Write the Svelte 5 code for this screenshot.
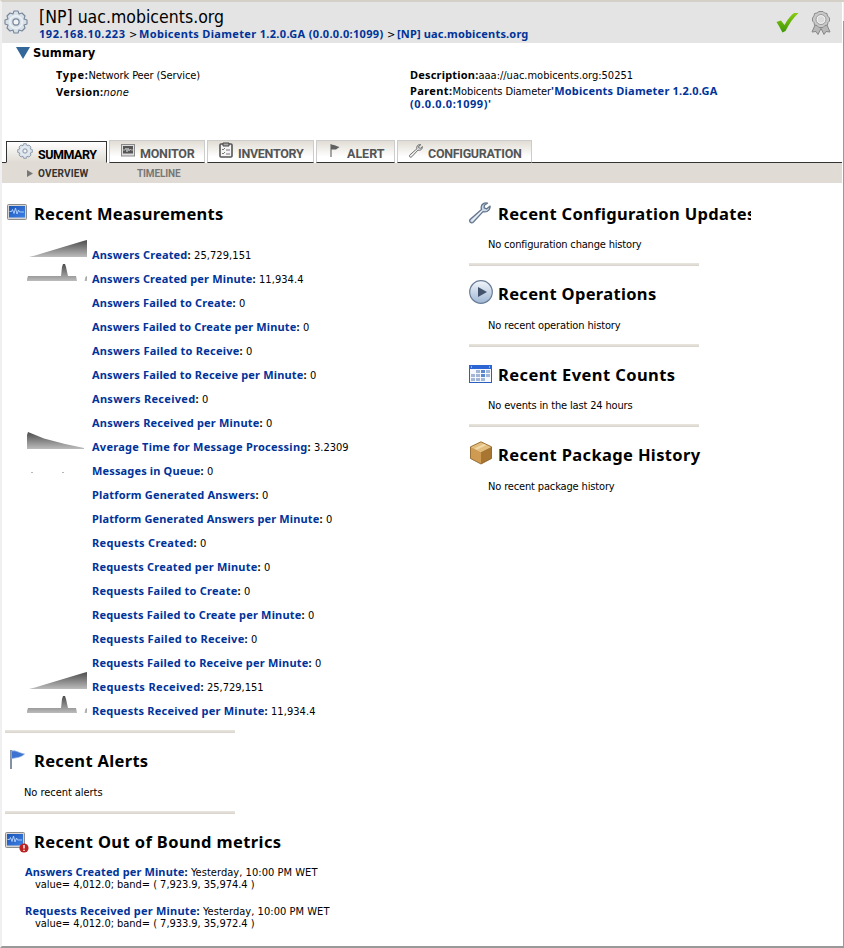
<script>
  // Spreads the letters of a label evenly over the given width.
  function fit(node, width) {
    const natural = node.getBoundingClientRect().width;
    const count = node.textContent.length;
    node.style.letterSpacing = `${(width - 0.5 - natural) / count}px`;
  }

  const metrics = [
    ['Answers Created', 96, '25,729,151', 64, 'rise'],
    ['Answers Created per Minute', 161, '11,934.4', 51, 'spike'],
    ['Answers Failed to Create', 141, '0', 12],
    ['Answers Failed to Create per Minute', 205, '0', 12],
    ['Answers Failed to Receive', 148, '0', 12],
    ['Answers Failed to Receive per Minute', 212, '0', 12],
    ['Answers Received', 104, '0', 12],
    ['Answers Received per Minute', 168, '0', 12],
    ['Average Time for Message Processing', 216, '3.2309', 41, 'fall'],
    ['Messages in Queue', 109, '0', 12, 'dots'],
    ['Platform Generated Answers', 164, '0', 12],
    ['Platform Generated Answers per Minute', 228, '0', 12],
    ['Requests Created', 102, '0', 12],
    ['Requests Created per Minute', 166, '0', 12],
    ['Requests Failed to Create', 146, '0', 12],
    ['Requests Failed to Create per Minute', 210, '0', 12],
    ['Requests Failed to Receive', 153, '0', 12],
    ['Requests Failed to Receive per Minute', 217, '0', 12],
    ['Requests Received', 109, '25,729,151', 63, 'rise'],
    ['Requests Received per Minute', 173, '11,934.4', 51, 'spike']
  ];

  const panels = [
    ['wrench', 'Recent Configuration Updates', 258, 'No configuration change history', 154, 12],
    ['play', 'Recent Operations', 159, 'No recent operation history', 133, 13],
    ['calendar', 'Recent Event Counts', 178, 'No events in the last 24 hours', 145, 12],
    ['box', 'Recent Package History', 203, 'No recent package history', 127, 13]
  ];

  const bounds = [
    ['Answers Created per Minute', 160, 'Yesterday, 10:00 PM WET', 127, 'value= 4,012.0; band= ( 7,923.9, 35,974.4 )', 220],
    ['Requests Received per Minute', 172, 'Yesterday, 10:00 PM WET', 127, 'value= 4,012.0; band= ( 7,933.9, 35,972.4 )', 220]
  ];

  const tabs = [
    ['monitor', 'MONITOR', 55],
    ['inventory', 'INVENTORY', 66],
    ['alert', 'ALERT', 38],
    ['configuration', 'CONFIGURATION', 94]
  ];
</script>

{#snippet gear(size)}
  <svg class="gear" width={size} height={size} viewBox="0 0 24 24">
    <path d="M10 1h4l1 3 3-1 3 3-1 3 3 1v4l-3 1 1 3-3 3-3-1-1 3h-4l-1-3-3 1-3-3 1-3-3-1v-4l3-1-1-3 3-3 3 1z" fill="#d8e0e8" stroke="#76869b" stroke-width="1.1" stroke-linejoin="round" />
    <circle cx="12" cy="12" r="6.3" fill="none" stroke="#eef2f6" stroke-width="1.4" />
    <circle cx="12" cy="12" r="3.1" fill="#f3f4f6" stroke="#76869b" stroke-width="1.2" />
  </svg>
{/snippet}

{#snippet wrench(size, fill, stroke)}
  <svg width={size} height={size} viewBox="0 0 22 22">
    <path d="M18.500 1.200c-2.800-.8-6 .7-6.300 3.800-.1 1 .1 1.800.3 2.500L1.300 17.200c-1 1-.8 2.200 0 3s2.200.9 3.100-.1L14 9.600c3 1 6.500-.6 7-3.900l.1-1.600-3.300 2.700-2.700-1 .3-2.500z" fill={fill} stroke={stroke} stroke-width="1.300" stroke-linejoin="round" />
    <path d="M3 18.700 13.200 8.500" stroke="#fff" stroke-width="1" />
  </svg>
{/snippet}

{#snippet chart()}
  <svg width="24" height="20" viewBox="0 0 24 20">
    <defs>
      <linearGradient id="screen" x1="0" y1="0" x2="1" y2="1">
        <stop offset="0" stop-color="#1c55b8" /><stop offset="1" stop-color="#3e80e4" />
      </linearGradient>
    </defs>
    <rect x=".5" y=".5" width="19" height="15" rx="1" fill="#d5d5d5" stroke="#8c8c8c" />
    <rect x="2" y="2" width="16" height="11.500" fill="url(#screen)" />
    <path d="M2.500 7.500h2l1-2 1.500 4 1.500-5.500 1.500 6 1.500-4 1 2h4.500" fill="none" stroke="#b9d6ff" stroke-width=".9" />
  </svg>
{/snippet}

{#snippet spark(kind)}
  <svg class="spark" width="60" height="18" viewBox="0 0 60 18">
    <defs>
      <linearGradient id="shade" gradientUnits="userSpaceOnUse" x1="0" y1="0" x2="0" y2="17">
        <stop offset="0" stop-color="#4c4c4c" /><stop offset="1" stop-color="#bcbcbc" />
      </linearGradient>
    </defs>
    {#if kind === 'rise'}
      <path d="M2 17 8 15.500 57 .8 60 0v17z" fill="url(#shade)" />
    {:else if kind === 'spike'}
      <path d="M0 17v-2l1-3h33l1-9 1-3h2l1 3 2 9h8l1 5zM57.500 17l1-4 1.500-1v5z" fill="url(#shade)" />
    {:else if kind === 'fall'}
      <path d="M0 17V3l1-3 16 6.500L38 12l19 4v1z" fill="url(#shade)" />
    {:else if kind === 'dots'}
      <path d="M4 16.500h2M35 16.500h2" stroke="#b5b5b5" />
    {/if}
  </svg>
{/snippet}

<div class="page">
  <header>
    <div class="lead">{@render gear(24)}</div>
    <div class="titles">
      <h1><span use:fit={185.5}>[NP] uac.mobicents.org</span></h1>
      <nav class="crumbs">
        <a use:fit={87}>192.168.10.223</a><i>&gt;</i><a use:fit={245}>Mobicents Diameter 1.2.0.GA (0.0.0.0:1099)</a><i>&gt;</i><a use:fit={132}>[NP] uac.mobicents.org</a>
      </nav>
    </div>
    <svg class="check" width="24" height="22" viewBox="0 0 24 22">
      <defs>
        <linearGradient id="green" x1="0" y1="0" x2="0" y2="1">
          <stop offset="0" stop-color="#8acb10" /><stop offset="1" stop-color="#3c9608" />
        </linearGradient>
      </defs>
      <path d="M.5 10 5 8.500 8.500 13C11.500 7.500 15 3 18 1h4.500C17 6 13 12 9.500 19l-3 1.500C4.500 17 3 13.500.5 10z" fill="url(#green)" />
    </svg>
    <svg class="badge" width="20" height="25" viewBox="0 0 20 25">
      <path d="M4 15 1 22l4-.5L7 24.500l3-6 3 6 2-3 4 .5-3-7z" fill="#b8b8b8" stroke="#888" />
      <path d="M8 1.500h4l1.500 1.500 2.500.5.500 2.500L18.500 8v3L17 12.500l-.5 2.500-2.500.5-2 2H8l-2-2-2.500-.5L3 12.500 1.500 11V8L3 6l.5-2.500L6 3z" fill="#c9c9c9" stroke="#8a8a8a" />
      <circle cx="10" cy="9.500" r="5" fill="#eee" stroke="#999" />
      <circle cx="10" cy="9.500" r="3.200" fill="#dadada" />
    </svg>
  </header>

  <section class="summary">
    <div class="fold">
      <svg width="14" height="12" viewBox="0 0 14 12"><path d="M0 0h14L7 12z" fill="#336699" /></svg>
      <b use:fit={63}>Summary</b>
    </div>
    <div class="facts">
      <div class="left">
        <p><b use:fit={33}>Type:</b><span use:fit={112}>Network Peer (Service)</span></p>
        <p class="version"><b use:fit={48}>Version:</b><em use:fit={26}>none</em></p>
      </div>
      <div>
        <p><b use:fit={69}>Description:</b><span use:fit={155}>aaa://uac.mobicents.org:50251</span></p>
        <p class="parent"><b use:fit={43}>Parent:</b><span use:fit={99}>Mobicents Diameter </span><a use:fit={167}>'Mobicents Diameter 1.2.0.GA</a></p>
        <p class="wrap"><a use:fit={82}>(0.0.0.0:1099)'</a></p>
      </div>
    </div>
  </section>

  <nav class="tabs">
    <div class="tab active">
      {@render gear(16)}
      <span use:fit={59}>SUMMARY</span>
    </div>
    {#each tabs as [id, label, width]}
      <div class="tab {id}">
        {#if id === 'monitor'}
          <svg width="14" height="13" viewBox="0 0 14 13">
            <rect x=".5" y=".5" width="13" height="11.500" fill="#ddd" stroke="#888" />
            <rect x="2" y="2" width="10" height="7.500" fill="#555" />
            <path d="M2 6h2l1-2 1 4 1-4 1 3 1-2 1 1h2" fill="none" stroke="#ccc" stroke-width=".8" />
          </svg>
        {:else if id === 'inventory'}
          <svg width="14" height="16" viewBox="0 0 14 16">
            <rect x="1" y="2" width="12" height="13" rx="1" fill="#f4f4f4" stroke="#555" stroke-width="1.600" />
            <path d="M4 1h6v3H4z" fill="#aaa" stroke="#444" />
            <path d="m3 7 1 1 2-2M3 11l1 1 2-2M7 8h4M7 12h4" fill="none" stroke="#777" />
          </svg>
        {:else if id === 'alert'}
          <svg width="10" height="14" viewBox="0 0 10 14">
            <path d="M1 0v13" stroke="#777" stroke-width="1.300" /><path d="M1 1c3-1 4 1 8.500 2L6 5.500H1z" fill="#606060" />
          </svg>
        {:else}
          {@render wrench(14, '#e4e4e4', '#555')}
        {/if}
        <span use:fit={width}>{label}</span>
      </div>
    {/each}
    <div class="rest"></div>
  </nav>
  <nav class="subtabs">
    <svg width="6" height="7" viewBox="0 0 6 7"><path d="M0 0v7l6-3.500z" fill="#777" /></svg>
    <b use:fit={51}>OVERVIEW</b>
    <b class="dim" use:fit={44}>TIMELINE</b>
  </nav>

  <main>
    <div class="column">
      <h2 class="inset"><span class="icon">{@render chart()}</span><span use:fit={190}>Recent Measurements</span></h2>
      <ul>
        {#each metrics as [name, width, value, rest, kind]}
          <li>
            {@render spark(kind)}
            <div><a use:fit={width}>{name}</a><b class="colon">:</b><span use:fit={rest - 6}>{value}</span></div>
          </li>
        {/each}
      </ul>
      <hr />
      <h2>
        <span class="icon flag">
          <svg width="16" height="20" viewBox="0 0 16 20">
            <path d="M1 0v19" stroke="#5c6b85" stroke-width="1.500" /><path d="M1.500 1c5-.8 7 2 13 3-3 3-6 3.500-13 4.500z" fill="#3c72d0" stroke="#8fb1ea" stroke-width=".7" />
          </svg>
        </span><span use:fit={115}>Recent Alerts</span>
      </h2>
      <p class="note alerts"><span use:fit={79}>No recent alerts</span></p>
      <hr />
      <h2>
        <span class="icon bound">
          {@render chart()}
          <svg class="warn" width="10" height="10" viewBox="0 0 10 10"><circle cx="5" cy="5" r="4.600" fill="#bd2222" /><path d="M5 2v3.500M5 6.700v1.400" stroke="#fff" stroke-width="1.400" /></svg>
        </span><span use:fit={248}>Recent Out of Bound metrics</span>
      </h2>
      <div class="bounds">
        {#each bounds as [name, width, when, whenWidth, band, bandWidth]}
          <div class="item">
            <p><a use:fit={width}>{name}</a><b class="colon">:</b><span use:fit={whenWidth}>{when}</span></p>
            <p class="band"><span use:fit={bandWidth}>{band}</span></p>
          </div>
        {/each}
      </div>
    </div>

    <div class="column right">
      {#each panels as [icon, title, width, note, noteWidth, gap], i}
        <h2>
          <span class="icon {icon}">
            {#if icon === 'wrench'}
              {@render wrench(22, '#cbd8e8', '#63758c')}
            {:else if icon === 'play'}
              <svg width="24" height="24" viewBox="0 0 24 24">
                <defs><linearGradient id="disc" x1="0" y1="0" x2="0" y2="1"><stop offset="0" stop-color="#f2f6fa" /><stop offset="1" stop-color="#9fb7d4" /></linearGradient></defs>
                <circle cx="12" cy="12" r="11.300" fill="url(#disc)" stroke="#6a7d98" stroke-width="1.200" />
                <path d="M9 7v10l9-5z" fill="#43536c" />
              </svg>
            {:else if icon === 'calendar'}
              <svg width="23" height="18" viewBox="0 0 23 18">
                <rect x=".5" y=".5" width="22" height="17" fill="#f5f8fd" stroke="#2a5fc0" />
                <path d="M0 0h23v4H0z" fill="#2d66d4" /><path d="M2 2h1M20 2h1" stroke="#fff" />
                <path d="M7 5h4v3H7zM17 5h4v3h-4zM2 9h4v3H2zM7 9h4v3H7zM17 9h4v3h-4zM2 13h4v3H2zM7 13h4v3H7zM12 13h4v3h-4z" fill="#a3b6d6" />
                <path d="M12 5h4v3h-4zM12 9h4v3h-4z" fill="#5b86d0" />
              </svg>
            {:else}
              <svg width="24" height="24" viewBox="0 0 24 24">
                <path d="m12 .8 10.500 5L12 11 1.500 5.800z" fill="#e3bd7c" /><path d="M1.500 5.800 12 11v12L1.500 17.500z" fill="#cf9a52" /><path d="M22.500 5.800 12 11v12l10.500-5.500z" fill="#a87630" />
                <path d="m5.500 7.500 10-5 2.500 1.200-10 5z" fill="#f0d8a8" /><path d="m12 .8 10.500 5v11.700L12 23 1.500 17.500V5.800z" fill="none" stroke="#85591d" stroke-width=".8" />
              </svg>
            {/if}
          </span><span use:fit={width}>{title}</span>
        </h2>
        <p class="note" style:margin-top="{gap}px"><span use:fit={noteWidth}>{note}</span></p>
        {#if i < 3}<hr />{/if}
      {/each}
    </div>
  </main>
</div>

<style>
  :global(body) { margin: 0; background: #fff; }
  .page {
    box-sizing: border-box; width: 844px; height: 948px; overflow: hidden;
    border-top: 2px solid #d4d0c8; border-left: 2px solid #f0f0f0; border-bottom: 2px solid #999;
    background: linear-gradient(#f0f0f0 19px, #999 19px) right / 1px 100% no-repeat #fff;
    color: #000; font: 11px/14px "DejaVu Sans Condensed", "DejaVu Sans", sans-serif;
  }
  p, h1, h2, ul { margin: 0; padding: 0; font-weight: normal; }
  span, a, b, em { white-space: pre; }
  a, b { font-family: "Noto Sans", "DejaVu Sans Condensed", sans-serif; font-weight: bold; }
  a { color: #003399; }
  .colon { display: inline-block; width: 6.5px; }
  svg { display: block; flex: none; }
  header { display: flex; width: 840px; height: 41px; background: #e4e4e4; }
  .lead { width: 37px; padding: 8px 0 0 2px; box-sizing: border-box; }
  .titles { flex: 1; }
  h1 { height: 20px; padding-top: 5px; font-size: 17.5px; line-height: 20px; }
  .crumbs { display: flex; align-items: baseline; height: 14px; line-height: 14px; }
  .crumbs i { width: 13.5px; padding-left: 3.5px; box-sizing: border-box; font-style: normal; }
  .check { margin: 10px 11px 0 0; }
  .badge { margin: 8px 11px 0 0; }
  .summary { height: 97px; }
  .fold { display: flex; gap: 3px; padding: 4px 0 0 14px; height: 12px; }
  .fold b { font: bold 11.5px/14px "DejaVu Sans", sans-serif; margin-top: -1px; }
  .facts { display: flex; padding: 9px 0 0 54px; }
  .left { width: 354px; }
  .facts p { height: 14px; }
  .facts .version { margin-top: 3px; }
  .facts .parent { margin-top: 2px; }
  .facts .wrap { margin-top: -1px; }
  .tabs { display: flex; height: 23px; align-items: stretch; font: bold 12.5px/14px Roboto, "Liberation Sans", Arial, sans-serif; }
  .tabs::before { content: ""; width: 4px; border-bottom: 1px solid #333; }
  .tab {
    display: flex; box-sizing: border-box; margin-right: 2px; color: #555;
    border: 1px solid #ccc; border-bottom-color: #333; background: linear-gradient(#e1ddd4, #fff 75%);
  }
  .tab span { padding-top: 5px; }
  .active { width: 101px; margin-top: 1px; padding: 1px 0 0 10px; gap: 5px; color: #000; border-color: #333; border-bottom-color: #e0dcd5; background: linear-gradient(#fff, #e0dcd5); }
  .monitor { width: 96px; padding: 3px 0 0 11px; gap: 5px; }
  .monitor span { padding-top: 3px; }
  .inventory { width: 107px; padding: 1px 0 0 11px; gap: 5px; }
  .alert { width: 79px; padding: 3px 0 0 13px; gap: 7px; }
  .alert span { padding-top: 3px; }
  .configuration { width: 135px; padding: 3px 0 0 11px; gap: 5px; margin-right: 0; }
  .configuration span { padding-top: 3px; }
  .rest { flex: 1; margin-right: 2px; border-bottom: 1px solid #333; }
  .subtabs { display: flex; width: 840px; height: 20px; background: #e0dcd5; color: #333; font: bold 10px/21px Roboto, "Liberation Sans", Arial, sans-serif; }
  .subtabs b { font-family: inherit; }
  .subtabs svg { margin: 7px 5px 0 25px; }
  .subtabs .dim { margin-left: 48.5px; color: #777; }
  main { display: flex; padding-top: 19px; }
  .column { width: 464px; padding-left: 3px; box-sizing: border-box; }
  .column.right { width: 285px; }
  h2 { display: flex; height: 24px; font: bold 16.5px/24px "Noto Sans", "DejaVu Sans Condensed", sans-serif; }
  .right h2 { overflow-x: clip; }
  .icon { display: flex; align-items: center; width: 29px; flex: none; white-space: normal; }
  .icon.wrench, .icon.calendar { margin-top: -2px; }
  .icon.play, .icon.box { margin-top: -4px; }
  .inset .icon { box-sizing: border-box; padding-left: 2px; }
  .flag { box-sizing: border-box; padding-left: 5px; margin-top: -2px; }
  .bound { position: relative; }
  .warn { position: absolute; left: 14px; top: 13px; }
  ul { margin-top: 17px; list-style: none; }
  li { display: flex; height: 24px; line-height: 24px; padding-left: 22px; }
  .spark { margin: -3px 5px 0 0; }
  hr { width: 230px; height: 3px; margin: 11px 0 16px; border: 0; background: linear-gradient(#e6e2dc 1px, #d6d2ca); }
  ul + hr { margin-top: 7px; }
  .note { height: 14px; padding-left: 19px; }
  .alerts { margin-top: 13px; }
  .bounds { padding: 11px 0 0 20px; line-height: 13px; }
  .bounds p { height: 13px; }
  .item { margin-bottom: 13px; }
  .bounds .band { padding-left: 10px; }
</style>
